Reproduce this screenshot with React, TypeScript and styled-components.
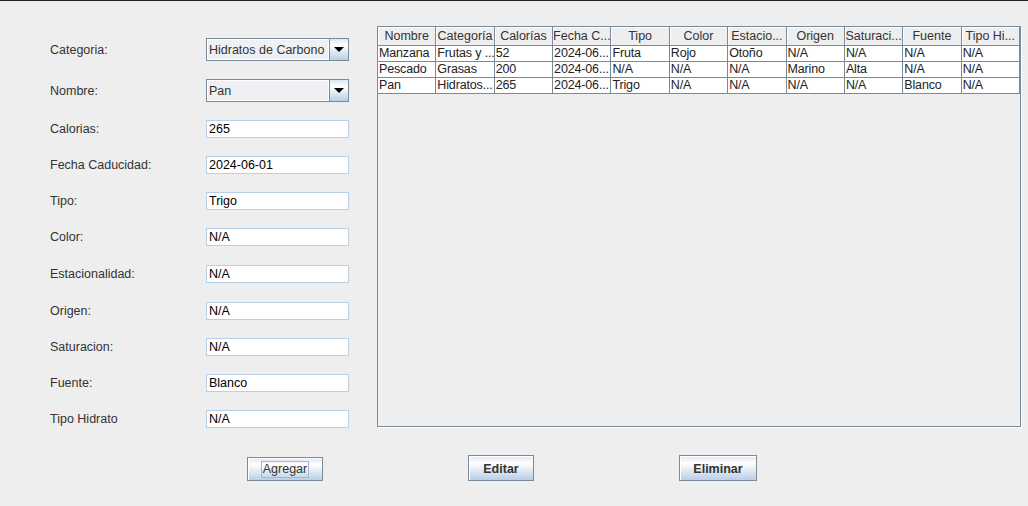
import styled, { createGlobalStyle } from 'styled-components';

const GlobalStyle = createGlobalStyle`
  body {
    margin: 0;
    background: #eeeeee;
    font-family: "Liberation Sans", Arial, sans-serif;
  }
`;

const Window = styled.div`
  width: 1028px;
  height: 506px;
  box-sizing: border-box;
  border-top: 1px solid #222222;
  background: #eeeeee;
  display: flex;
  flex-direction: column;
  overflow: hidden;
`;

const Main = styled.div`
  display: flex;
  align-items: flex-start;
`;

const Form = styled.div`
  width: 377px;
  box-sizing: border-box;
  padding: 28px 0 0 50px;
  display: flex;
  flex-direction: column;
`;

const FormRow = styled.div<{ $h: number }>`
  height: ${p => p.$h}px;
  display: grid;
  grid-template-columns: 156px 143px;
  align-items: center;
`;

const Label = styled.span`
  font-size: 12.5px;
  color: #333333;
`;

const TextField = styled.input`
  width: 143px;
  height: 18px;
  box-sizing: border-box;
  border: 1px solid #b8cfe5;
  background: #ffffff;
  padding: 0 2px;
  margin: 0;
  font-family: inherit;
  font-size: 12.5px;
  color: #000000;
  outline: none;
`;

const Combo = styled.div`
  width: 143px;
  height: 23px;
  box-sizing: border-box;
  border: 1px solid #7a8a99;
  display: flex;
`;

const ComboValue = styled.div`
  flex: 1;
  padding-left: 2px;
  display: flex;
  align-items: center;
  background: #eef0f3;
  box-shadow: inset 1px 1px 0 #ffffff, inset -1px -1px 0 #ffffff;
  font-size: 12.5px;
  color: #333333;
  white-space: nowrap;
  overflow: hidden;
`;

const ComboArrow = styled.div`
  width: 18px;
  border-left: 1px solid #7a8a99;
  background: linear-gradient(#dde8f3 0%, #ffffff 30%, #b8cfe5 100%);
  display: flex;
  align-items: center;
  justify-content: center;

  &::after {
    content: '';
    border-left: 5px solid transparent;
    border-right: 5px solid transparent;
    border-top: 5px solid #000000;
  }
`;

const TablePane = styled.div`
  margin-top: 25px;
  width: 644px;
  height: 401px;
  box-sizing: border-box;
  border: 1px solid #7a8a99;
  box-shadow: 1px 1px 0 #ffffff;
  background: #eeeeee;
`;

const Grid = styled.div`
  display: grid;
  grid-template-columns: repeat(11, 1fr);
`;

const HeaderCell = styled.div`
  height: 19px;
  box-sizing: border-box;
  border-right: 1px solid #7a8a99;
  border-bottom: 1px solid #7a8a99;
  box-shadow: inset 1px 1px 0 #ffffff;
  background: #eeeeee;
  text-align: center;
  line-height: 18px;
  font-size: 12.5px;
  color: #333333;
  white-space: nowrap;
  overflow: hidden;
`;

const Cell = styled.div`
  height: 16px;
  box-sizing: border-box;
  border-right: 1px solid #7a8a99;
  border-bottom: 1px solid #7a8a99;
  background: #ffffff;
  padding-left: 1px;
  line-height: 15px;
  font-size: 12.5px;
  letter-spacing: -0.15px;
  color: #222222;
  white-space: nowrap;
  overflow: hidden;
`;

const ButtonRow = styled.div`
  margin-top: 18px;
  padding-left: 247px;
  display: flex;
  align-items: flex-end;
  gap: 145px;
`;

const Button = styled.button<{ $w: number; $h: number; $bold?: boolean }>`
  width: ${p => p.$w}px;
  height: ${p => p.$h}px;
  box-sizing: border-box;
  border: 1px solid #7a8a99;
  background: linear-gradient(#dde8f3 0%, #ffffff 30%, #b8cfe5 100%);
  box-shadow: inset 1px 1px 0 #ffffff;
  padding: 1px 0 0;
  display: flex;
  align-items: center;
  justify-content: center;
  font-family: inherit;
  font-size: 12.5px;
  font-weight: ${p => (p.$bold ? 700 : 400)};
  color: #333333;
`;

const FocusRing = styled.span`
  border: 1px solid #a3b8cc;
  padding: 0 1px;
  line-height: 15px;
`;

const headers = [
  'Nombre', 'Categoría', 'Calorías', 'Fecha C...', 'Tipo', 'Color',
  'Estacio...', 'Origen', 'Saturaci...', 'Fuente', 'Tipo Hi...',
];

const rows = [
  ['Manzana', 'Frutas y ...', '52', '2024-06...', 'Fruta', 'Rojo', 'Otoño', 'N/A', 'N/A', 'N/A', 'N/A'],
  ['Pescado', 'Grasas', '200', '2024-06...', 'N/A', 'N/A', 'N/A', 'Marino', 'Alta', 'N/A', 'N/A'],
  ['Pan', 'Hidratos...', '265', '2024-06...', 'Trigo', 'N/A', 'N/A', 'N/A', 'N/A', 'Blanco', 'N/A'],
];

const fields = [
  { label: 'Calorias:', value: '265', h: 36 },
  { label: 'Fecha Caducidad:', value: '2024-06-01', h: 36 },
  { label: 'Tipo:', value: 'Trigo', h: 36 },
  { label: 'Color:', value: 'N/A', h: 36 },
  { label: 'Estacionalidad:', value: 'N/A', h: 37 },
  { label: 'Origen:', value: 'N/A', h: 37 },
  { label: 'Saturacion:', value: 'N/A', h: 36 },
  { label: 'Fuente:', value: 'Blanco', h: 36 },
  { label: 'Tipo Hidrato', value: 'N/A', h: 36 },
];

const App = () => (
  <>
    <GlobalStyle />
    <Window>
      <Main>
        <Form>
          <FormRow $h={41}>
            <Label>Categoria:</Label>
            <Combo>
              <ComboValue>Hidratos de Carbono</ComboValue>
              <ComboArrow />
            </Combo>
          </FormRow>
          <FormRow $h={41}>
            <Label>Nombre:</Label>
            <Combo>
              <ComboValue>Pan</ComboValue>
              <ComboArrow />
            </Combo>
          </FormRow>
          {fields.map(f => (
            <FormRow key={f.label} $h={f.h}>
              <Label>{f.label}</Label>
              <TextField defaultValue={f.value} />
            </FormRow>
          ))}
        </Form>
        <TablePane>
          <Grid>
            {headers.map(h => (
              <HeaderCell key={h}>{h}</HeaderCell>
            ))}
            {rows.map((r, i) =>
              r.map((c, j) => <Cell key={`${i}-${j}`}>{c}</Cell>)
            )}
          </Grid>
        </TablePane>
      </Main>
      <ButtonRow>
        <Button $w={76} $h={24}>
          <FocusRing>Agregar</FocusRing>
        </Button>
        <Button $w={66} $h={26} $bold>Editar</Button>
        <Button $w={78} $h={26} $bold>Eliminar</Button>
      </ButtonRow>
    </Window>
  </>
);

export default App;
